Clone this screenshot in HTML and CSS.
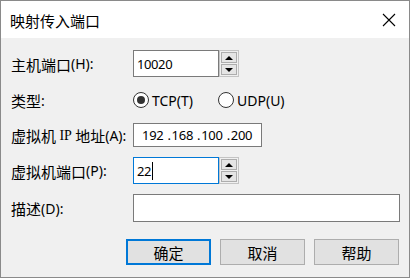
FILE: index.html
```html
<!DOCTYPE html>
<html lang="zh-CN">
<head>
    <meta charset="UTF-8">
    <meta name="viewport" content="width=device-width, initial-scale=1.0">
    <link rel="stylesheet" href="styles.css">
</head>
<body>
    <div class="window">
        <div class="titlebar">
            <span class="title">映射传入端口</span>
            <svg class="close" width="14" height="14" viewBox="0 0 14 14">
                <path d="M1 1 L13 13 M13 1 L1 13" stroke="#000" stroke-width="1.1" fill="none"/>
            </svg>
        </div>
        <div class="content">
            <div class="form">
                <div class="label">主机端口<span class="lat">(H):</span></div>
                <div class="spin">
                    <div class="field">10020</div>
                    <div class="spin-btns">
                        <div class="spin-btn"><span class="arrow-up"></span></div>
                        <div class="spin-btn"><span class="arrow-down"></span></div>
                    </div>
                </div>

                <div class="label">类型<span class="lat">:</span></div>
                <div class="radios">
                    <div class="radio checked"><span class="circle"></span><span class="lat">TCP(T)</span></div>
                    <div class="radio"><span class="circle"></span><span class="lat">UDP(U)</span></div>
                </div>

                <div class="label">虚拟机 <span class="ip">IP</span> 地址<span class="lat">(A):</span></div>
                <div class="ipbox">
                    <span>192</span><span class="dot">.</span><span>168</span><span class="dot">.</span><span>100</span><span class="dot">.</span><span>200</span>
                </div>

                <div class="label">虚拟机端口<span class="lat">(P):</span></div>
                <div class="spin">
                    <div class="field focused">22<span class="caret"></span></div>
                    <div class="spin-btns">
                        <div class="spin-btn"><span class="arrow-up"></span></div>
                        <div class="spin-btn"><span class="arrow-down"></span></div>
                    </div>
                </div>

                <div class="label">描述<span class="lat">(D):</span></div>
                <div class="textbox"></div>
            </div>
            <div class="buttons">
                <button class="default">确定</button>
                <button>取消</button>
                <button>帮助</button>
            </div>
        </div>
    </div>
</body>
</html>
```

FILE: styles.css
```css
body {
    margin: 0;
    padding: 0;
    background-color: #ffffff;
    font-family: "Noto Sans CJK SC", "Noto Sans", sans-serif;
    font-size: 15px;
    color: #000;
}

.window {
    width: 408px;
    height: 276px;
    border: 1px solid #8a8a8a;
    background-color: #f0f0f0;
    display: flex;
    flex-direction: column;
}

.titlebar {
    height: 37px;
    background-color: #ffffff;
    display: flex;
    align-items: center;
    justify-content: space-between;
    padding: 0 13px 0 9px;
}

.title {
    font-size: 15px;
    line-height: 1;
    margin-top: 1px;
}

.close {
    display: block;
    margin-top: 1px;
}

.content {
    padding: 12px 9px 0 10px;
}

.form {
    display: grid;
    grid-template-columns: 122px 1fr;
    grid-template-rows: 27px 26px 24px 27px 28px;
    row-gap: 10px;
}

.label {
    display: flex;
    align-items: center;
    white-space: pre;
    font-size: 15px;
    line-height: 1;
    padding-top: 1px;
}

.lat {
    font-family: "Noto Sans", sans-serif;
    font-size: 14px;
}

.ip {
    font-family: "Liberation Serif", serif;
    font-size: 14px;
}

.spin {
    display: flex;
    width: 106px;
}

.field {
    border: 1px solid #7a7a7a;
    background-color: #fff;
    font-family: "Noto Sans", sans-serif;
    font-size: 13px;
    letter-spacing: -0.4px;
    display: flex;
    align-items: center;
    padding-left: 3px;
    box-sizing: border-box;
    width: 86px;
}

.field.focused {
    border-color: #0078d7;
}

.caret {
    display: inline-block;
    width: 1px;
    height: 18px;
    background-color: #000;
    margin-left: 1px;
}

.spin-btns {
    width: 20px;
    border: 1px solid #c4c4c4;
    box-sizing: border-box;
    display: flex;
    flex-direction: column;
    gap: 1px;
    padding: 1px;
    background-color: #f0f0f0;
}

.spin-btn {
    flex: 1;
    background-color: #e5e5e5;
    border: 1px solid #adadad;
    display: flex;
    align-items: center;
    justify-content: center;
}

.arrow-up {
    width: 0;
    height: 0;
    border-left: 4px solid transparent;
    border-right: 4px solid transparent;
    border-bottom: 4px solid #000;
}

.arrow-down {
    width: 0;
    height: 0;
    border-left: 4px solid transparent;
    border-right: 4px solid transparent;
    border-top: 4px solid #000;
}

.radios {
    display: flex;
    align-items: center;
    gap: 25px;
}

.radio {
    display: flex;
    align-items: center;
    gap: 3px;
}

.circle {
    width: 14px;
    height: 14px;
    border: 1px solid #333;
    border-radius: 50%;
    background-color: #fff;
    display: flex;
    align-items: center;
    justify-content: center;
}

.radio.checked .circle::after {
    content: "";
    width: 8px;
    height: 8px;
    border-radius: 50%;
    background-color: #333;
}

.ipbox {
    width: 129px;
    box-sizing: border-box;
    border: 1px solid #7a7a7a;
    background-color: #fff;
    display: flex;
    align-items: center;
    padding-left: 8px;
    font-family: "Noto Sans", sans-serif;
    font-size: 13px;
    letter-spacing: -0.3px;
}

.dot {
    margin: 0 1px 0 4px;
}

.textbox {
    width: 267px;
    box-sizing: border-box;
    border: 1px solid #7a7a7a;
    background-color: #fff;
}

.buttons {
    display: flex;
    justify-content: flex-end;
    gap: 9px;
    margin-top: 17px;
    padding-right: 1px;
}

button {
    width: 85px;
    height: 26px;
    background-color: #e1e1e1;
    border: 1px solid #adadad;
    font-family: "Noto Sans CJK SC", sans-serif;
    font-size: 15px;
    color: #000;
    padding: 0;
    line-height: 1;
}

button.default {
    border: 2px solid #0078d7;
}
```
